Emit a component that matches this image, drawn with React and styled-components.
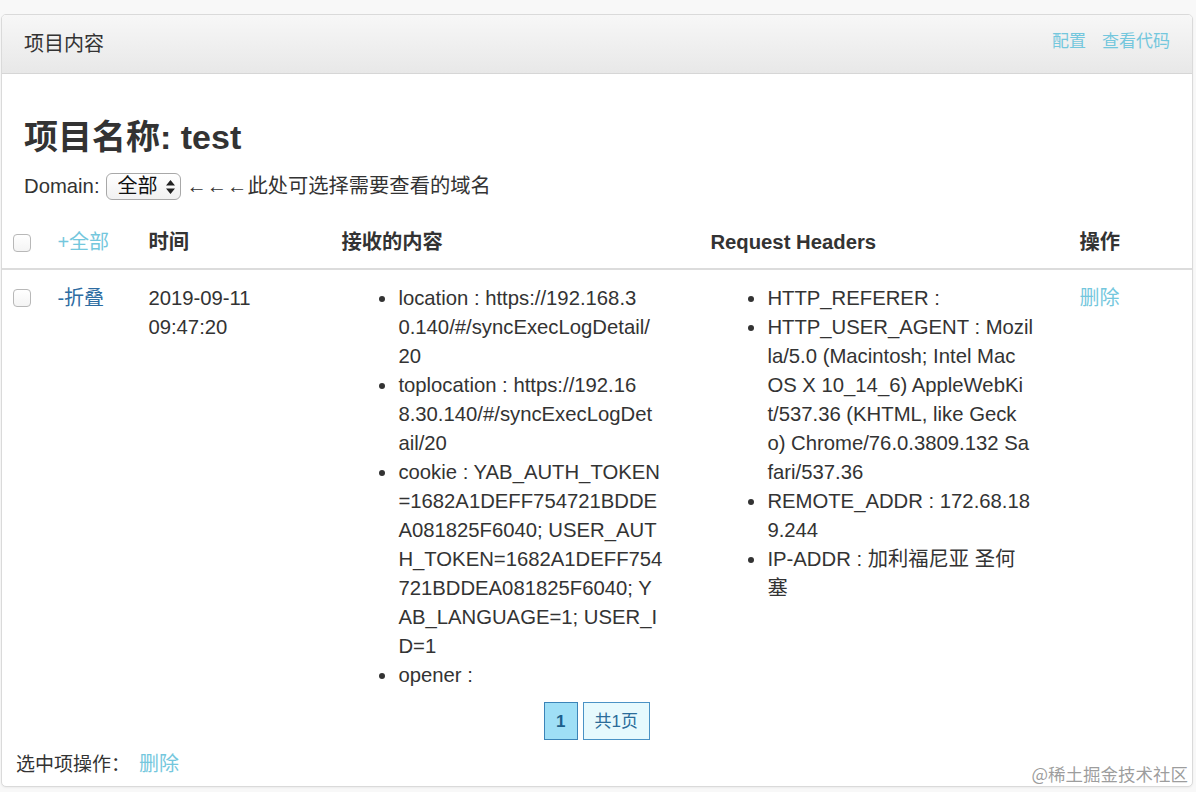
import React from 'react';
import styled, { createGlobalStyle } from 'styled-components';

const Global = createGlobalStyle`
  html, body { margin: 0; padding: 0; background: #f8f8f8; }
  body {
    font-family: "Liberation Sans", "Noto Sans CJK SC", sans-serif;
    color: #333;
    font-size: 20.3px;
    line-height: 29px;
  }
  * { box-sizing: border-box; }
`;

const Page = styled.div`
  position: relative;
  padding: 14px 3px 3px 1px;
`;

const Panel = styled.section`
  background: #fff;
  border: 1px solid #dadada;
  border-radius: 5px;
  overflow: hidden;
  box-shadow: 0 1px 2px rgba(0, 0, 0, 0.05);
`;

const PanelHeading = styled.header`
  height: 59px;
  display: flex;
  align-items: center;
  justify-content: space-between;
  padding: 0 22px;
  background: linear-gradient(#f7f7f7, #e8e8e8);
  border-bottom: 1px solid #d6d6d6;
`;

const PanelTitle = styled.div`
  font-size: 20px;
  color: #333;
`;

const HeadLinks = styled.nav`
  display: flex;
  gap: 16px;
  margin-bottom: 6px;
`;

const Link = styled.a`
  color: ${p => (p.$dark ? '#2d6ca2' : '#74c7dd')};
  font-size: ${p => p.$size || '20px'};
  font-weight: normal;
  text-decoration: none;
  cursor: pointer;
`;

const PanelBody = styled.div`
  padding: 45px 22px 16px;
`;

const Title = styled.h3`
  margin: 0 0 15.6px;
  font-size: 34px;
  line-height: 37.4px;
  font-weight: bold;
  color: #333;
`;

const DomainRow = styled.div`
  display: flex;
  align-items: center;
  height: 29px;
`;

const SelectWrap = styled.span`
  position: relative;
  display: inline-flex;
  margin: 0 6px 0 6px;
`;

const Select = styled.select`
  appearance: none;
  -webkit-appearance: none;
  width: 75px;
  height: 27px;
  padding: 0 0 0 11px;
  border: 1px solid #a8a8a8;
  border-radius: 6px;
  background: linear-gradient(#ffffff, #f1f1f1);
  font-family: "Liberation Sans", "Noto Sans CJK SC", sans-serif;
  font-size: 20px;
  color: #111;
  line-height: 25px;
`;

const SelectArrows = styled.svg`
  position: absolute;
  right: 6px;
  top: 7px;
  pointer-events: none;
`;

const Table = styled.table`
  width: 100%;
  border-collapse: collapse;
  table-layout: fixed;
`;

const Th = styled.th`
  text-align: left;
  font-weight: bold;
  padding: 11.2px 11.4px;
  border-bottom: 2px solid #dcdcdc;
  vertical-align: bottom;
  line-height: 29px;
`;

const Td = styled.td`
  padding: 13.2px 11.4px 11.4px;
  vertical-align: top;
  line-height: 29px;
`;

const Check = styled.input.attrs({ type: 'checkbox' })`
  appearance: none;
  -webkit-appearance: none;
  display: block;
  width: 18px;
  height: 18px;
  margin: 5.5px 0;
  border: 1px solid #b8b8b8;
  border-radius: 4px;
  background: linear-gradient(#fff, #f4f4f4);
`;

const List = styled.ul`
  margin: 0;
  padding-left: 57px;
  list-style: disc;
`;

const Item = styled.li`
  white-space: pre;
`;

const Pager = styled.div`
  display: flex;
  justify-content: center;
  gap: 5px;
  margin-top: 1.5px;
`;

const PageItem = styled.span`
  display: inline-flex;
  align-items: center;
  justify-content: center;
  height: 38px;
  padding: 0 11px;
  min-width: ${p => (p.$active ? '33px' : '67px')};
  font-size: 17px;
  font-weight: ${p => (p.$active ? 'bold' : 'normal')};
  color: ${p => (p.$active ? '#1d5f8c' : '#2b6c9a')};
  background: ${p => (p.$active ? '#9fdff6' : '#e6f9fd')};
  border: 1px solid ${p => (p.$active ? '#3b84b8' : '#4a92c5')};
`;

const Footer = styled.div`
  display: flex;
  align-items: center;
  padding: 9.5px 14px 7px;
  line-height: 29px;
`;

const FooterLabel = styled.span`
  font-size: 19px;
  margin-right: 9px;
`;

const Watermark = styled.div`
  position: absolute;
  right: 8px;
  bottom: 6px;
  font-family: "Noto Sans CJK SC", sans-serif;
  font-size: 17.5px;
  line-height: 20px;
  color: rgba(140, 140, 140, 0.85);
`;

const received = [
  ['location : https://192.168.3', '0.140/#/syncExecLogDetail/', '20'],
  ['toplocation : https://192.16', '8.30.140/#/syncExecLogDet', 'ail/20'],
  [
    'cookie : YAB_AUTH_TOKEN',
    '=1682A1DEFF754721BDDE',
    'A081825F6040; USER_AUT',
    'H_TOKEN=1682A1DEFF754',
    '721BDDEA081825F6040; Y',
    'AB_LANGUAGE=1; USER_I',
    'D=1',
  ],
  ['opener :'],
];

const headers = [
  ['HTTP_REFERER :'],
  [
    'HTTP_USER_AGENT : Mozil',
    'la/5.0 (Macintosh; Intel Mac',
    'OS X 10_14_6) AppleWebKi',
    't/537.36 (KHTML, like Geck',
    'o) Chrome/76.0.3809.132 Sa',
    'fari/537.36',
  ],
  ['REMOTE_ADDR : 172.68.18', '9.244'],
  ['IP-ADDR : 加利福尼亚 圣何', '塞'],
];

export default function App() {
  return (
    <Page>
      <Global />
      <Panel>
        <PanelHeading>
          <PanelTitle>项目内容</PanelTitle>
          <HeadLinks>
            <Link $size="17px">配置</Link>
            <Link $size="17px">查看代码</Link>
          </HeadLinks>
        </PanelHeading>
        <PanelBody>
          <Title>项目名称: test</Title>
          <DomainRow>
            Domain:
            <SelectWrap>
              <Select defaultValue="all">
                <option value="all">全部</option>
              </Select>
              <SelectArrows width="9" height="14" viewBox="0 0 9 14">
                <path d="M4.5 0 L9 5.5 H0 Z M0 8.5 H9 L4.5 14 Z" fill="#222" />
              </SelectArrows>
            </SelectWrap>
            ←←←此处可选择需要查看的域名
          </DomainRow>
        </PanelBody>
        <Table>
          <colgroup>
            <col style={{ width: 44 }} />
            <col style={{ width: 91 }} />
            <col style={{ width: 193 }} />
            <col style={{ width: 369 }} />
            <col style={{ width: 369 }} />
            <col />
          </colgroup>
          <thead>
            <tr>
              <Th><Check /></Th>
              <Th><Link>+全部</Link></Th>
              <Th>时间</Th>
              <Th>接收的内容</Th>
              <Th>Request Headers</Th>
              <Th>操作</Th>
            </tr>
          </thead>
          <tbody>
            <tr>
              <Td><Check /></Td>
              <Td><Link $dark>-折叠</Link></Td>
              <Td>2019-09-11 09:47:20</Td>
              <Td>
                <List>
                  {received.map(lines => <Item key={lines[0]}>{lines.join('\n')}</Item>)}
                </List>
              </Td>
              <Td>
                <List>
                  {headers.map(lines => <Item key={lines[0]}>{lines.join('\n')}</Item>)}
                </List>
              </Td>
              <Td><Link>删除</Link></Td>
            </tr>
          </tbody>
        </Table>
        <Pager>
          <PageItem $active>1</PageItem>
          <PageItem>共1页</PageItem>
        </Pager>
        <Footer>
          <FooterLabel>选中项操作：</FooterLabel>
          <Link>删除</Link>
        </Footer>
      </Panel>
      <Watermark>@稀土掘金技术社区</Watermark>
    </Page>
  );
}
